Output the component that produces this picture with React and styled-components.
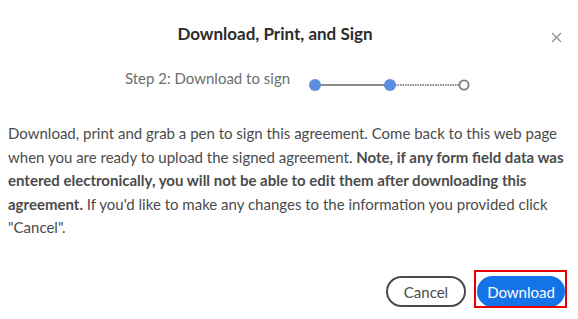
import React from "react";
import styled, { createGlobalStyle } from "styled-components";

const GlobalStyle = createGlobalStyle`
  html, body {
    margin: 0;
    padding: 0;
    background: #ffffff;
  }
  body {
    font-family: "Lato", "Open Sans", sans-serif;
  }
`;

const Dialog = styled.div`
  width: 578px;
  height: 319px;
  box-sizing: border-box;
  display: flex;
  flex-direction: column;
  background: #fff;
`;

const Header = styled.div`
  display: flex;
  align-items: center;
  padding: 17px 8px 0 8px;
`;

const Title = styled.h2`
  flex: 1;
  margin: 0;
  text-align: center;
  font-size: 17px;
  font-weight: 700;
  color: #2c2c2c;
  line-height: 22px;
`;

const CloseButton = styled.button`
  width: 28px;
  height: 28px;
  border: 0;
  background: transparent;
  padding: 0;
  display: flex;
  align-items: center;
  justify-content: center;
  cursor: pointer;
  margin-top: 6px;
`;

const StepRow = styled.div`
  display: flex;
  align-items: flex-start;
  justify-content: center;
  gap: 19px;
  padding: 16px 0 0 26px;
`;

const StepLabel = styled.span`
  font-size: 15px;
  color: #6e6e6e;
  line-height: 22px;
`;

const Stepper = styled.svg`
  margin-top: 11px;
  display: block;
`;

const Body = styled.p`
  margin: 30px 0 0 0;
  padding: 0 8px;
  font-size: 15px;
  line-height: 23.5px;
  color: #4b4b4b;
`;

const Footer = styled.div`
  margin-top: auto;
  display: flex;
  justify-content: flex-end;
  gap: 11px;
  padding: 0 13px 12px 0;
`;

const Button = styled.button`
  position: relative;
  box-sizing: border-box;
  width: ${(p) => (p.$primary ? "88px" : "80px")};
  height: 31px;
  border-radius: 16px;
  font-family: inherit;
  font-size: 15px;
  padding: 0;
  border: 2px solid ${(p) => (p.$primary ? "#1473e6" : "#4b4b4b")};
  background: ${(p) => (p.$primary ? "#1473e6" : "#fff")};
  color: ${(p) => (p.$primary ? "#fff" : "#4b4b4b")};
  cursor: pointer;

  ${(p) =>
    p.$highlight &&
    `
    &::after {
      content: "";
      position: absolute;
      top: -8px;
      left: -5px;
      right: -4px;
      bottom: -3px;
      border: 2px solid #e60000;
      pointer-events: none;
    }
  `}
`;

function StepDots() {
  return (
    <Stepper width="170" height="14" viewBox="0 0 170 14">
      <line x1="6" y1="7" x2="80" y2="7" stroke="#8a8a8a" strokeWidth="2" />
      <line
        x1="86"
        y1="7"
        x2="150"
        y2="7"
        stroke="#8a8a8a"
        strokeWidth="2"
        strokeDasharray="1.5 1"
      />
      <circle cx="6" cy="7" r="6" fill="#5b8ee0" />
      <circle cx="81" cy="7" r="6" fill="#5b8ee0" />
      <circle cx="155" cy="7" r="4.6" fill="#fff" stroke="#7d7d7d" strokeWidth="1.8" />
    </Stepper>
  );
}

export default function App() {
  return (
    <>
      <GlobalStyle />
      <Dialog>
        <Header>
          <Title>Download, Print, and Sign</Title>
          <CloseButton aria-label="Close">
            <svg width="11" height="11" viewBox="0 0 11 11">
              <path d="M1 1 L10 10 M10 1 L1 10" stroke="#8a8a8a" strokeWidth="1.1" />
            </svg>
          </CloseButton>
        </Header>
        <StepRow>
          <StepLabel>Step 2: Download to sign</StepLabel>
          <StepDots />
        </StepRow>
        <Body>
          Download, print and grab a pen to sign this agreement. Come back to this web page
          when you are ready to upload the signed agreement.{" "}
          <b>
            Note, if any form field data was entered electronically, you will not be able to
            edit them after downloading this agreement.
          </b>{" "}
          If you'd like to make any changes to the information you provided click "Cancel".
        </Body>
        <Footer>
          <Button>Cancel</Button>
          <Button $primary $highlight>
            Download
          </Button>
        </Footer>
      </Dialog>
    </>
  );
}
